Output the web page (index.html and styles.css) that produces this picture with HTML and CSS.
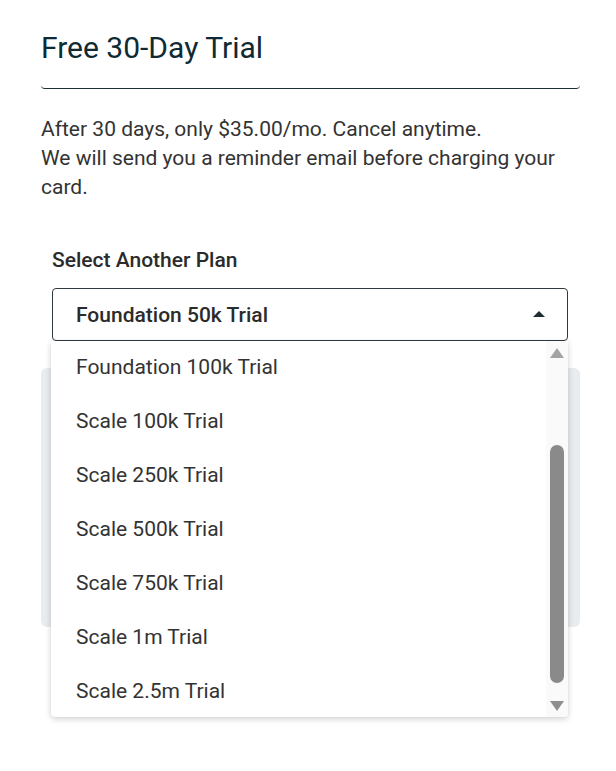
FILE: index.html
```html
<!DOCTYPE html>
<html>
<head>
<meta charset="utf-8">
<link rel="stylesheet" href="styles.css">
</head>
<body>
<div class="page">
  <div class="header">
    <h1 class="title">Free 30-Day Trial</h1>
  </div>
  <p class="info">After 30 days, only $35.00/mo. Cancel anytime.<br>We will send you a reminder email before charging your card.</p>
  <div class="field">
    <div class="label">Select Another Plan</div>
    <div class="select-wrap">
      <div class="select">
        <span class="select-value">Foundation 50k Trial</span>
        <span class="caret"></span>
      </div>
      <div class="dropdown">
        <div class="options">
          <ul class="list">
            <li class="option">Foundation 100k Trial</li>
            <li class="option">Scale 100k Trial</li>
            <li class="option">Scale 250k Trial</li>
            <li class="option">Scale 500k Trial</li>
            <li class="option">Scale 750k Trial</li>
            <li class="option">Scale 1m Trial</li>
            <li class="option">Scale 2.5m Trial</li>
          </ul>
        </div>
        <div class="scrollbar">
          <span class="arrow-up"></span>
          <div class="track"><div class="thumb"></div></div>
          <span class="arrow-down"></span>
        </div>
      </div>
    </div>
  </div>
  <div class="panel"></div>
</div>
</body>
</html>
```
FILE: styles.css
```css
* { box-sizing: border-box; }
html, body { margin: 0; padding: 0; background: #ffffff; }
body {
  font-family: Roboto, "Liberation Sans", Arial, sans-serif;
  color: #333333;
  min-height: 771px;
}
.page {
  width: 539px;
  margin-left: 41px;
  padding-top: 28px;
  min-height: 771px;
}
.header {
  border-bottom: 1px solid #1a2f38;
  border-radius: 0 0 4px 4px;
  padding-bottom: 20px;
}
.title {
  margin: 0;
  font-size: 30px;
  font-weight: 400;
  line-height: 40px;
  color: #0f2a33;
}
.info {
  margin: 26px 0 0;
  font-size: 21px;
  line-height: 29px;
  color: #333333;
}
.field {
  padding: 0 12px 0 11px;
  margin-top: 46px;
}
.label {
  font-size: 21px;
  font-weight: 500;
  line-height: 24px;
  color: #2b2b2b;
}
.select-wrap {
  position: relative;
  margin-top: 16px;
}
.select {
  height: 53px;
  border: 1px solid #2f3a40;
  border-radius: 4px;
  display: flex;
  align-items: center;
  justify-content: space-between;
  padding: 0 22px 0 23px;
}
.select-value {
  font-size: 21px;
  font-weight: 500;
  color: #2b2b2b;
}
.caret {
  width: 0;
  height: 0;
  border-left: 6px solid transparent;
  border-right: 6px solid transparent;
  border-bottom: 6px solid #1f2d33;
  margin-top: -2px;
}
.dropdown {
  position: absolute;
  left: -1px;
  right: 0;
  top: 53px;
  height: 376px;
  background: #ffffff;
  border-radius: 0 0 4px 4px;
  box-shadow: 0 2px 6px rgba(0, 0, 0, 0.18), 0 0 2px rgba(0, 0, 0, 0.06);
  display: flex;
  overflow: hidden;
  z-index: 2;
}
.options {
  flex: 1;
  overflow: hidden;
}
.list {
  list-style: none;
  margin: -1px 0 0;
  padding: 0;
}
.option {
  height: 54px;
  line-height: 54px;
  padding-left: 25px;
  font-size: 21px;
  color: #333333;
}
.scrollbar {
  width: 22px;
  background: #fafafa;
  display: flex;
  flex-direction: column;
  align-items: center;
  padding: 7px 0 6px;
}
.arrow-up, .arrow-down {
  width: 0;
  height: 0;
  border-left: 7px solid transparent;
  border-right: 7px solid transparent;
}
.arrow-up { border-bottom: 10px solid #a3a3a3; }
.arrow-down { border-top: 10px solid #8f8f8f; }
.track {
  flex: 1;
  width: 14px;
  display: flex;
  flex-direction: column;
  padding: 87px 0 18px;
}
.thumb {
  flex: 1;
  background: #8a8a8a;
  border-radius: 7px;
}
.panel {
  margin-top: 27px;
  height: 259px;
  background: #e9ecef;
  border-radius: 6px;
}
```
